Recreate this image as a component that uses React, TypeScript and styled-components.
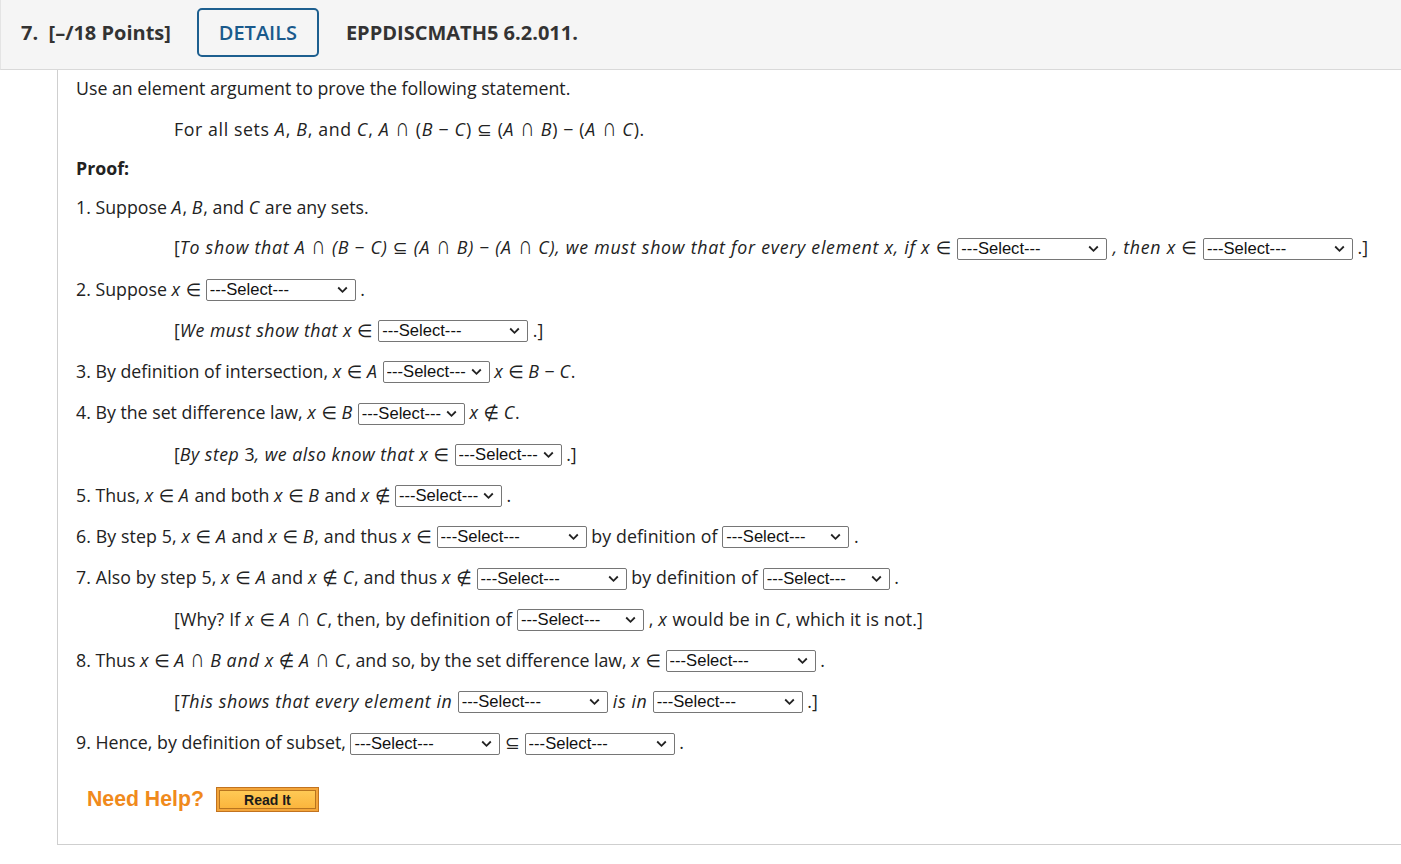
import React from "react";
import styled, { createGlobalStyle } from "styled-components";

const Global = createGlobalStyle`
  html, body { margin: 0; padding: 0; background: #fff; }
  body { font-family: "Open Sans", "Liberation Sans", "DejaVu Sans", sans-serif; color: #222; }
`;

const Page = styled.div`
  width: 1401px;
`;

const Header = styled.div`
  height: 70px;
  box-sizing: border-box;
  padding: 0 0 4px 20px;
  background: #f5f5f5;
  border-bottom: 1px solid #d9d9d9;
  border-left: 1px solid #e4e4e4;
  display: flex;
  align-items: center;
  font-size: 20px;
  font-weight: 700;
  color: #333;
`;

const QNum = styled.span`
  margin-right: 26px;
  white-space: pre;
`;

const DetailsButton = styled.button`
  width: 122px;
  height: 49px;
  border: 2px solid #1d5f8f;
  border-radius: 5px;
  background: #f5f5f5;
  color: #1a5a8c;
  font-family: "Open Sans", sans-serif;
  font-size: 20px;
  font-weight: 600;
  margin-right: 27px;
  padding: 0;
`;

const Code = styled.span``;

const Content = styled.div`
  margin-left: 57px;
  border-left: 1px solid #cfcfcf;
  border-bottom: 1px solid #cfcfcf;
  padding-left: 18px;
  padding-bottom: 8px;
  font-size: 17.75px;
`;

const Row = styled.div<{ $h?: number; $indent?: boolean; $italic?: boolean; $spread?: number }>`
  height: ${(p) => p.$h ?? 41.25}px;
  line-height: ${(p) => p.$h ?? 41.25}px;
  white-space: pre;
  padding-left: ${(p) => (p.$indent ? 98 : 0)}px;
  font-style: ${(p) => (p.$italic ? "italic" : "normal")};
  letter-spacing: ${(p) => p.$spread ?? (p.$italic ? 0.5 : 0)}px;
`;

const Intro = styled.div`
  height: 39px;
  box-sizing: border-box;
  padding-top: 7px;
  line-height: 22px;
`;

const Bold = styled.span`
  font-weight: 700;
`;

const V = styled.i`
  letter-spacing: 1px;
`;

const Cap = styled.span`
  display: inline-block;
  font-family: "Liberation Sans", sans-serif;
  font-style: normal;
  letter-spacing: 0;
  line-height: 1;
  margin: 0 1.5px;
  transform: scale(1.1, 1.45);
  transform-origin: 50% 81%;
`;

const Up = styled.span`
  font-style: normal;
  letter-spacing: 0;
`;

const SelectWrap = styled.span<{ $w: number }>`
  position: relative;
  display: inline-block;
  vertical-align: middle;
  width: ${(p) => p.$w}px;
  height: 22px;
  line-height: 20px;
  margin: -2px 0 0 0;
  font-style: normal;
  letter-spacing: 0;
`;

const NativeSelect = styled.select`
  appearance: none;
  -webkit-appearance: none;
  display: block;
  width: 100%;
  height: 22px;
  box-sizing: border-box;
  border: 1px solid #767676;
  border-radius: 2px;
  background: #fff;
  color: #111;
  font-family: "Liberation Sans", Arial, sans-serif;
  font-size: 16.6px;
  padding: 0 0 0 3px;
  line-height: 20px;
  margin: 0;
`;

const Chevron = styled.svg`
  position: absolute;
  right: 8px;
  top: 7px;
  pointer-events: none;
`;

const HelpRow = styled.div`
  height: 72px;
  display: flex;
  align-items: center;
  padding-left: 11px;
  gap: 12px;
`;

const NeedHelp = styled.span`
  font-family: "Liberation Sans", Arial, sans-serif;
  font-weight: 700;
  font-size: 21.25px;
  color: #f08a1c;
`;

const ReadIt = styled.button`
  width: 103px;
  height: 25px;
  box-sizing: border-box;
  border: 1px solid #c2731f;
  background: #f3a53a;
  padding: 2px;
  display: flex;
`;

const ReadItInner = styled.span`
  flex: 1;
  border: 1px solid #b8741f;
  background: linear-gradient(#ffc955, #fbb53d);
  font-family: "Liberation Sans", Arial, sans-serif;
  font-weight: 700;
  font-size: 14px;
  color: #1a1a1a;
  display: flex;
  align-items: center;
  justify-content: center;
`;

const Sel = ({ w }: { w: number }) => (
  <SelectWrap $w={w}>
    <NativeSelect defaultValue="">
      <option value="">---Select---</option>
    </NativeSelect>
    <Chevron width="11" height="8" viewBox="0 0 11 8">
      <path d="M1.2 1.5 L5.5 5.8 L9.8 1.5" fill="none" stroke="#222" strokeWidth="1.8" />
    </Chevron>
  </SelectWrap>
);

const I = () => <Cap>∩</Cap>;

export default function App() {
  return (
    <Page>
      <Global />
      <Header>
        <QNum>7.  [–/18 Points]</QNum>
        <DetailsButton>DETAILS</DetailsButton>
        <Code>EPPDISCMATH5 6.2.011.</Code>
      </Header>
      <Content>
        <Intro>Use an element argument to prove the following statement.</Intro>
        <Row $indent $spread={0.6}>
          For all sets <V>A</V>, <V>B</V>, and <V>C</V>, <V>A</V> <I /> (<V>B</V> − <V>C</V>) ⊆ (<V>A</V> <I /> <V>B</V>) − (<V>A</V> <I /> <V>C</V>).
        </Row>
        <Row $h={37}>
          <Bold>Proof:</Bold>
        </Row>
        <Row $h={40}>
          1. Suppose <V>A</V>, <V>B</V>, and <V>C</V> are any sets.
        </Row>
        <Row $indent $italic $spread={0.75}>
          <Up>[</Up>To show that A <I /> (B − C) ⊆ (A <I /> B) − (A <I /> C), we must show that for every element x, if x ∈ <Sel w={150} />
          {" , then x ∈ "}<Sel w={150} />
          <Up> .]</Up>
        </Row>
        <Row>
          2. Suppose <V>x</V> ∈ <Sel w={150} /> .
        </Row>
        <Row $indent $italic>
          <Up>[</Up>We must show that x ∈ <Sel w={150} />
          <Up> .]</Up>
        </Row>
        <Row>
          3. By definition of intersection, <V>x</V> ∈ <V>A</V> <Sel w={107} /> <V>x</V> ∈ <V>B</V> − <V>C</V>.
        </Row>
        <Row>
          4. By the set difference law, <V>x</V> ∈ <V>B</V> <Sel w={107} /> <V>x</V> ∉ <V>C</V>.
        </Row>
        <Row $indent $italic>
          <Up>[</Up>By step <Up>3</Up>, we also know that x ∈ <Sel w={107} />
          <Up> .]</Up>
        </Row>
        <Row>
          5. Thus, <V>x</V> ∈ <V>A</V> and both <V>x</V> ∈ <V>B</V> and <V>x</V> ∉ <Sel w={107} /> .
        </Row>
        <Row $spread={0.1}>
          6. By step 5, <V>x</V> ∈ <V>A</V> and <V>x</V> ∈ <V>B</V>, and thus <V>x</V> ∈ <Sel w={150} /> by definition of <Sel w={127} /> .
        </Row>
        <Row $spread={0.12}>
          7. Also by step 5, <V>x</V> ∈ <V>A</V> and <V>x</V> ∉ <V>C</V>, and thus <V>x</V> ∉ <Sel w={150} /> by definition of <Sel w={127} /> .
        </Row>
        <Row $indent $spread={0.15}>
          [Why? If <V>x</V> ∈ <V>A</V> <I /> <V>C</V>, then, by definition of <Sel w={127} /> , <V>x</V> would be in <V>C</V>, which it is not.]
        </Row>
        <Row>
          8. Thus <V>x</V> ∈ <V>A</V> <I /> <V>B</V> <V>and</V> <V>x</V> ∉ <V>A</V> <I /> <V>C</V>, and so, by the set difference law, <V>x</V> ∈ <Sel w={150} /> .
        </Row>
        <Row $indent $italic $spread={0.62}>
          <Up>[</Up>This shows that every element in <Sel w={150} />
          {" is in "}<Sel w={150} />
          <Up> .]</Up>
        </Row>
        <Row>
          9. Hence, by definition of subset, <Sel w={150} /> ⊆ <Sel w={150} /> .
        </Row>
        <HelpRow>
          <NeedHelp>Need Help?</NeedHelp>
          <ReadIt>
            <ReadItInner>Read It</ReadItInner>
          </ReadIt>
        </HelpRow>
      </Content>
    </Page>
  );
}
